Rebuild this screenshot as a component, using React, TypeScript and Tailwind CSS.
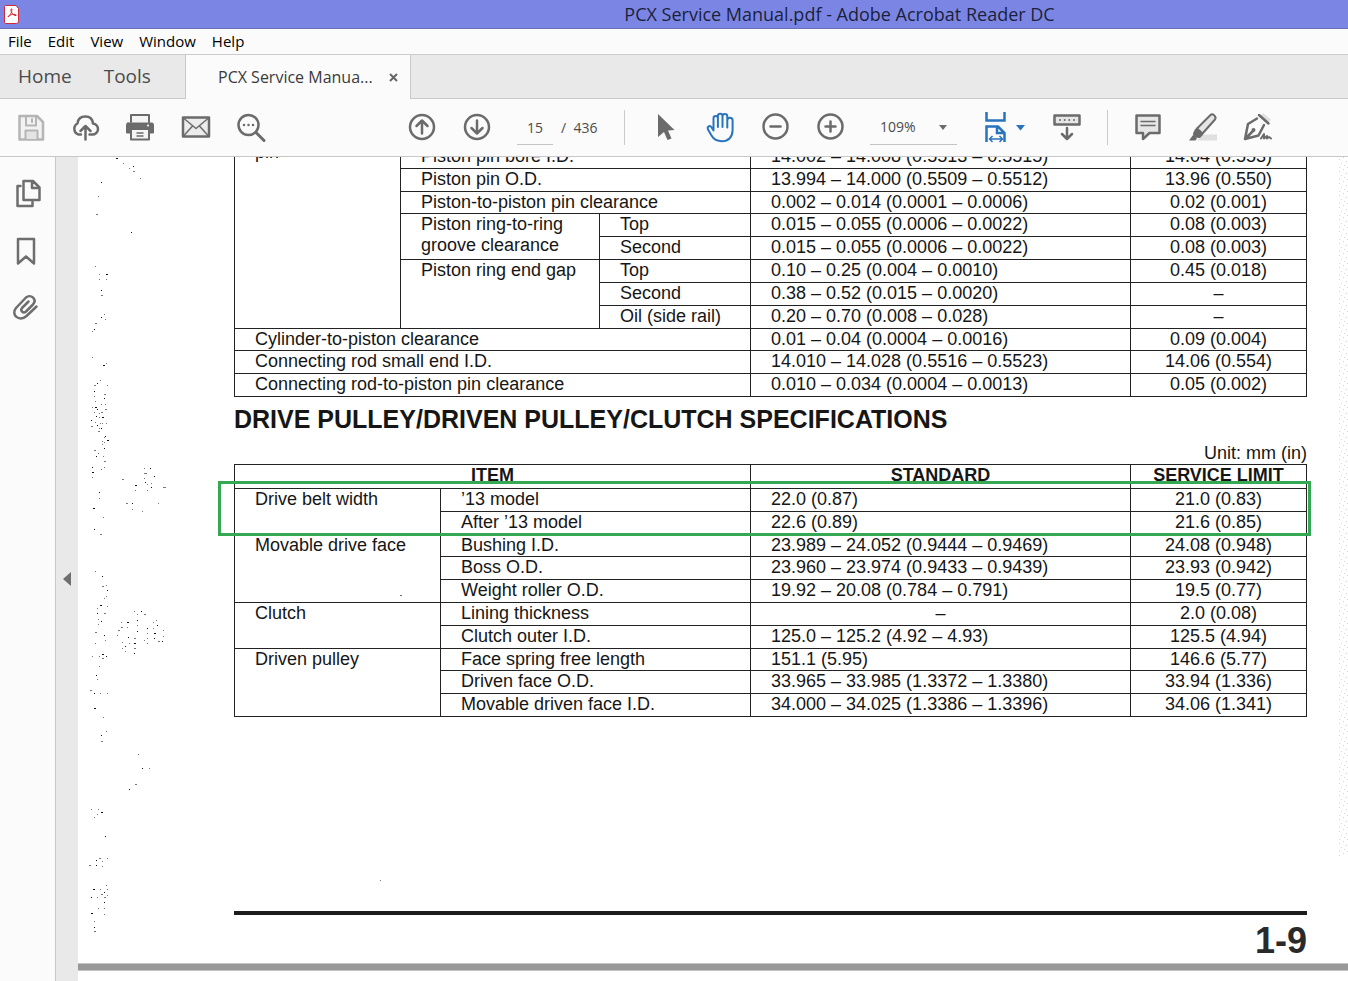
import type { ReactNode } from "react";

type SpecRow = {
  cells: { text: string; cols?: number; rows?: number; tight?: boolean }[];
  standard: string;
  limit: string;
};

const menus = ["File", "Edit", "View", "Window", "Help"];

const pistonRows: SpecRow[] = [
  { cells: [{ text: "pin", rows: 8, tight: true }, { text: "Piston pin bore I.D.", cols: 2 }], standard: "14.002 – 14.008 (0.5513 – 0.5515)", limit: "14.04 (0.553)" },
  { cells: [{ text: "Piston pin O.D.", cols: 2 }], standard: "13.994 – 14.000 (0.5509 – 0.5512)", limit: "13.96 (0.550)" },
  { cells: [{ text: "Piston-to-piston pin clearance", cols: 2 }], standard: "0.002 – 0.014 (0.0001 – 0.0006)", limit: "0.02 (0.001)" },
  { cells: [{ text: "Piston ring-to-ring groove clearance", rows: 2 }, { text: "Top" }], standard: "0.015 – 0.055 (0.0006 – 0.0022)", limit: "0.08 (0.003)" },
  { cells: [{ text: "Second" }], standard: "0.015 – 0.055 (0.0006 – 0.0022)", limit: "0.08 (0.003)" },
  { cells: [{ text: "Piston ring end gap", rows: 3 }, { text: "Top" }], standard: "0.10 – 0.25 (0.004 – 0.0010)", limit: "0.45 (0.018)" },
  { cells: [{ text: "Second" }], standard: "0.38 – 0.52 (0.015 – 0.0020)", limit: "–" },
  { cells: [{ text: "Oil (side rail)" }], standard: "0.20 – 0.70 (0.008 – 0.028)", limit: "–" },
  { cells: [{ text: "Cylinder-to-piston clearance", cols: 3 }], standard: "0.01 – 0.04 (0.0004 – 0.0016)", limit: "0.09 (0.004)" },
  { cells: [{ text: "Connecting rod small end I.D.", cols: 3 }], standard: "14.010 – 14.028 (0.5516 – 0.5523)", limit: "14.06 (0.554)" },
  { cells: [{ text: "Connecting rod-to-piston pin clearance", cols: 3 }], standard: "0.010 – 0.034 (0.0004 – 0.0013)", limit: "0.05 (0.002)" },
];

const clutchRows: SpecRow[] = [
  { cells: [{ text: "Drive belt width", rows: 2 }, { text: "’13 model" }], standard: "22.0 (0.87)", limit: "21.0 (0.83)" },
  { cells: [{ text: "After ’13 model" }], standard: "22.6 (0.89)", limit: "21.6 (0.85)" },
  { cells: [{ text: "Movable drive face", rows: 3 }, { text: "Bushing I.D." }], standard: "23.989 – 24.052 (0.9444 – 0.9469)", limit: "24.08 (0.948)" },
  { cells: [{ text: "Boss O.D." }], standard: "23.960 – 23.974 (0.9433 – 0.9439)", limit: "23.93 (0.942)" },
  { cells: [{ text: "Weight roller O.D." }], standard: "19.92 – 20.08 (0.784 – 0.791)", limit: "19.5 (0.77)" },
  { cells: [{ text: "Clutch", rows: 2 }, { text: "Lining thickness" }], standard: "–", limit: "2.0 (0.08)" },
  { cells: [{ text: "Clutch outer I.D." }], standard: "125.0 – 125.2 (4.92 – 4.93)", limit: "125.5 (4.94)" },
  { cells: [{ text: "Driven pulley", rows: 3 }, { text: "Face spring free length" }], standard: "151.1 (5.95)", limit: "146.6 (5.77)" },
  { cells: [{ text: "Driven face O.D." }], standard: "33.965 – 33.985 (1.3372 – 1.3380)", limit: "33.94 (1.336)" },
  { cells: [{ text: "Movable driven face I.D." }], standard: "34.000 – 34.025 (1.3386 – 1.3396)", limit: "34.06 (1.341)" },
];

// scanner dirt down the left margin of the page, as "x,y" pairs
const specks =
  "38,1 45,6 51,11 55,9 55,14 62,21 23,25 20,39 18,57 53,75 17,109 21,117 28,117 21,122 28,122 23,133 23,138 26,157 23,160 27,162 17,166 16,172 14,174 14,200 25,208 28,206 22,223 19,226 16,228 29,228 16,234 16,239 26,237 26,241 17,244 14,250 17,250 23,247 27,247 19,252 27,252 16,255 18,259 21,256 23,255 13,263 17,265 21,260 24,260 22,266 24,266 19,268 13,269 21,271 23,271 28,266 20,274 27,279 26,280 24,284 29,283 26,285 24,287 26,291 16,293 20,296 18,299 25,299 26,304 14,310 26,310 23,312 14,315 14,320 66,311 72,311 66,316 68,316 76,319 66,321 " +
  "44,322 67,325 69,327 73,326 57,328 57,333 69,333 73,330 85,330 87,330 21,335 21,341 48,346 54,346 80,346 54,352 15,351 64,354 25,360 16,372 22,377 17,414 24,419 28,428 24,429 29,433 28,439 26,441 22,448 29,449 19,451 19,456 26,456 20,462 23,464 20,467 17,475 26,478 27,483 17,486 24,497 14,499 21,499 28,499 24,501 21,509 18,518 19,522 12,533 16,536 22,536 29,536 16,551 25,560 28,574 23,578 23,584 60,597 64,611 71,611 57,627 51,632 13,652 20,652 23,655 19,657 16,660 27,679 21,701 29,701 18,703 24,704 11,708 18,708 24,709 28,728 15,732 22,732 29,732 26,735 23,737 29,738 13,740 19,740 26,740 26,745 20,751 26,751 13,756 26,757 16,764 16,770 16,774 " +
  "56,454 63,454 59,457 66,457 59,463 78,463 43,465 49,465 75,465 59,468 79,468 43,470 49,470 69,471 75,471 40,473 59,474 85,473 69,476 76,476 39,478 85,479 50,480 56,481 69,481 76,481 66,483 80,484 84,484 44,485 51,486 56,486 69,486 44,491 47,489 56,491 47,494 56,496 302,723 322,438";

function Icon({ children, className = "" }: { children: ReactNode; className?: string }) {
  return (
    <svg width="32" height="32" viewBox="0 0 32 32" fill="none" stroke="currentColor" strokeWidth="2" strokeLinecap="round" strokeLinejoin="round" className={className} aria-hidden="true">
      {children}
    </svg>
  );
}

function ToolButton({ label, children, className = "text-[#6b6b6b]" }: { label: string; children: ReactNode; className?: string }) {
  return (
    <button type="button" aria-label={label} className={`flex h-10 w-[55px] shrink-0 items-center justify-center ${className}`}>
      {children}
    </button>
  );
}

function Divider() {
  return <div className="h-[35px] w-px shrink-0 bg-[#cacaca]" />;
}

function SpecRows({ rows }: { rows: SpecRow[] }) {
  return (
    <>
      {rows.map((row, i) => (
        <tr key={i}>
          {row.cells.map((cell) => (
            <td
              key={cell.text}
              colSpan={cell.cols}
              rowSpan={cell.rows}
              className={cell.tight ? "border border-[#222] pl-5 align-top leading-3" : "border border-[#222] pl-5 align-top"}
            >
              {cell.text}
            </td>
          ))}
          <td className={row.standard === "–" ? "border border-[#222] text-center align-top" : "border border-[#222] pl-5 align-top"}>{row.standard}</td>
          <td className="border border-[#222] text-center align-top">{row.limit}</td>
        </tr>
      ))}
    </>
  );
}

function Toolbar() {
  return (
    <div className="flex h-[58px] shrink-0 items-center border-b border-[#c8c8c8] bg-[#fbfbfb] pl-[3px]">
      <ToolButton label="Save" className="text-[#b5b5b5]">
        <Icon>
          <path strokeWidth="2.500" fill="#f2f2f2" d="M4.500 4h17.500l6 6v17.500h-23.500z" />
          <path d="M11 4.500v9h10v-9M17 7v3" />
          <path fill="#e4e4e4" d="M10.500 27v-8.500h12v8.500" />
        </Icon>
      </ToolButton>
      <ToolButton label="Share">
        <Icon>
          <path strokeWidth="2.500" d="M11 22.500H8.500A6 6 0 0 1 7.500 11.500C8 6.500 11.500 4.500 15.500 4.500S22.500 7 23 11.500A5.500 5.500 0 0 1 22 22.500h-2.500M15.500 27.500V14.500M10.500 19l5-5 5 5" />
        </Icon>
      </ToolButton>
      <ToolButton label="Print">
        <Icon>
          <path fill="#f4f4f4" d="M6 10V3h18v7" />
          <path fill="currentColor" d="M3 11h24a1.500 1.500 0 0 1 1.500 1.500v8.500h-4v-3h-19v3h-4v-8.500A1.500 1.500 0 0 1 3 11z" strokeWidth="1" />
          <path d="M6 17h18V27.500H6z" fill="#f4f4f4" />
          <path strokeWidth="1.500" d="M12 21h6M12 24h6" />
          <circle cx="23" cy="13.500" r="1" fill="#fff" stroke="none" />
        </Icon>
      </ToolButton>
      <ToolButton label="Email">
        <Icon>
          <path strokeWidth="2.500" fill="#ececec" d="M3 5.500h26v19H3z" />
          <path strokeWidth="1.500" d="M4 6.500l12 10 12-10M4 23.500l8.500-9.500M28 23.500L19.500 14" />
        </Icon>
      </ToolButton>
      <ToolButton label="Find">
        <Icon>
          <circle cx="13.500" cy="13" r="10" strokeWidth="2.500" />
          <path strokeWidth="3" d="M21 20.500l8 8" />
          <path strokeWidth="2.500" d="M9 13h0M13.500 13h0M18 13h0" />
        </Icon>
      </ToolButton>

      <div className="ml-[116px] flex shrink-0">
        <ToolButton label="Previous page">
          <Icon>
            <circle cx="16" cy="15" r="12" strokeWidth="2.500" />
            <path strokeWidth="2.500" d="M16 21.500V9M10.500 14l5.500-5.500 5.500 5.500" />
          </Icon>
        </ToolButton>
        <ToolButton label="Next page">
          <Icon>
            <circle cx="16" cy="15" r="12" strokeWidth="2.500" />
            <path strokeWidth="2.500" d="M16 8.500V21M10.500 16l5.500 5.500 5.500-5.500" />
          </Icon>
        </ToolButton>
      </div>
      <input aria-label="Page number" defaultValue="15" className="ml-[13px] h-[35px] w-9 shrink-0 border-b border-[#c4c4c4] bg-transparent text-center text-sm text-[#4b4b4b] outline-none" />
      <span className="ml-2 w-[63px] shrink-0 text-sm text-[#4b4b4b]">/&nbsp; 436</span>
      <Divider />
      <div className="ml-[13px] flex shrink-0">
        <ToolButton label="Select">
          <Icon>
            <path fill="currentColor" stroke="none" d="M8 2v23l6-5 3.500 8 4-1.500-3.500-8 6.500-.5z" />
          </Icon>
        </ToolButton>
        <ToolButton label="Pan" className="text-[#2a73bd]">
          <Icon>
            <path d="M8.500 18.500V6.200a2.200 2.200 0 0 1 4.400 0V15V4a2.300 2.300 0 0 1 4.600 0V15V4.500a2.400 2.400 0 0 1 4.800 0V15.500V8.500a2.300 2.300 0 0 1 5.300 0V18C27.600 25 23.500 29.200 17 29.200C11.500 29.200 8.500 27 6.500 23.500L3 17.500C1.800 14.500 5 13 6.500 15.200L8.500 18.500" />
          </Icon>
        </ToolButton>
        <ToolButton label="Zoom out">
          <Icon>
            <circle cx="15.500" cy="14.500" r="12" strokeWidth="2.500" />
            <path strokeWidth="2.500" d="M10.500 14.500h10" />
          </Icon>
        </ToolButton>
        <ToolButton label="Zoom in">
          <Icon>
            <circle cx="15.500" cy="14.500" r="12" strokeWidth="2.500" />
            <path strokeWidth="2.500" d="M10.500 14.500h10M15.500 9.500v10" />
          </Icon>
        </ToolButton>
      </div>
      <div className="relative ml-3 w-[87px] shrink-0">
        <select aria-label="Zoom level" className="h-[35px] w-full appearance-none border-b border-[#c4c4c4] bg-transparent pl-[10px] text-sm text-[#4b4b4b]">
          <option>109%</option>
        </select>
        <svg width="10" height="6" viewBox="0 0 10 6" className="pointer-events-none absolute right-[9px] top-[15px] text-[#6b6b6b]" aria-hidden="true">
          <path fill="currentColor" d="M1 0h8L5 5z" />
        </svg>
      </div>
      <button type="button" aria-label="Fit to width" className="ml-[27px] flex h-10 w-14 shrink-0 items-center gap-2 text-[#2a73bd]">
        <svg width="24" height="32" viewBox="0 0 24 32" fill="none" stroke="currentColor" strokeWidth="2.500" aria-hidden="true">
          <path d="M2.500 0v8.500h18V0M2.500 30V14.500h11.500l6.500 6.500V30M13 14.500V21h7.500" />
          <path strokeWidth="1.500" d="M5.500 27h13M8.500 24l-3 3 3 3M15.500 24l3 3-3 3" />
        </svg>
        <svg width="9" height="6" viewBox="0 0 9 6" aria-hidden="true">
          <path fill="currentColor" d="M0 0h9L4.500 5.500z" />
        </svg>
      </button>
      <div className="-ml-px flex shrink-0">
        <ToolButton label="Page display">
          <Icon>
            <path strokeWidth="2.500" fill="#e6e6e6" d="M3.500 3.500h25v9h-25z" />
            <path d="M9 8h0M13.700 8h0M18.300 8h0M23 8h0" />
            <path strokeWidth="2.500" d="M16 16v11M11 22l5 5 5-5" />
          </Icon>
        </ToolButton>
      </div>
      <div className="ml-[13px]">
        <Divider />
      </div>
      <div className="ml-3 flex shrink-0">
        <ToolButton label="Comment">
          <Icon>
            <path strokeWidth="2.500" fill="#e6e6e6" d="M4.500 3.500h23v17.500H17.500l-6.500 6v-6h-6.500z" />
            <path strokeWidth="1.500" d="M9 9.500h14M9 13.500h14" />
          </Icon>
        </ToolButton>
        <ToolButton label="Highlight">
          <Icon>
            <path fill="#e0e0e0" stroke="none" d="M16 22.500h14v6H10z" />
            <path fill="#e6e6e6" d="M10 16.500L23.500 3c2-2 6.500 1.500 4.500 4.500L15.500 21.500z" />
            <path fill="currentColor" d="M9 17.500l6 5-2.500 2.500-5-.5-.5-3z" />
            <path fill="currentColor" stroke="none" d="M6 23l4 3.500-1.500 2H2z" />
          </Icon>
        </ToolButton>
        <ToolButton label="Sign">
          <Icon>
            <path fill="#e0e0e0" stroke="none" d="M18 3.500l8 7.500 3-3.500-7.500-6z" />
            <path strokeWidth="2.500" d="M17 3l9.500 8.500M15 6.500L6 12 3 27l13.500-3.500L22 13M4 26l7-7" />
            <circle cx="11.500" cy="18" r="1" />
            <path d="M19 26.500l3-4.500v4.500l3-2.500v2.500l2-1.500 2 1.500" />
          </Icon>
        </ToolButton>
      </div>
    </div>
  );
}

function Sidebar() {
  return (
    <>
      <nav aria-label="Panels" className="flex w-14 shrink-0 flex-col border-r border-[#c8c8c8] bg-[#fbfbfb] pt-4 text-[#6e6e6e]">
        <button type="button" aria-label="Page thumbnails" className="flex h-[57px] items-start justify-center pt-1">
          <Icon>
            <path strokeWidth="2.500" d="M8.500 9H5.500V29h15v-4M11.500 4H21l6.500 6.500V23h-16zM20 4.500v6.500h7" />
          </Icon>
        </button>
        <button type="button" aria-label="Bookmarks" className="flex h-[57px] items-start justify-center pt-1">
          <Icon>
            <path strokeWidth="2.500" d="M6 5h16v24.500l-8-7-8 7z" />
          </Icon>
        </button>
        <button type="button" aria-label="Attachments" className="flex h-[57px] items-start justify-center pt-1">
          <Icon>
            <path strokeWidth="2.500" d="M24.500 15.500L14.500 25C7 31.500-1.500 23.500 4 17L14 6.500C18.500 2.500 25.500 8 21 13.500L14 20.500c-3 2.500-6-1-4-3.500l6.500-6.500" />
          </Icon>
        </button>
      </nav>
      <button type="button" aria-label="Collapse panel" className="flex w-[22px] shrink-0 items-center justify-center bg-[#e9e9e9] pt-5">
        <svg width="8" height="14" viewBox="0 0 8 14" aria-hidden="true">
          <path fill="#6e6e6e" d="M8 0v14L0 7z" />
        </svg>
      </button>
    </>
  );
}

function ManualPage() {
  return (
    <article className="relative flex h-[806px] shrink-0 flex-col bg-white pl-[156px] pr-[41px] font-['Liberation_Sans',Arial,sans-serif] text-lg leading-[21px] text-[#161616]">
      <svg className="pointer-events-none absolute left-0 top-0 h-full w-full" aria-hidden="true">
        {specks.split(" ").map((speck, i) => {
          const [x, y] = speck.split(",");
          return <rect key={i} x={x} y={y} width={i % 4 ? 1 : 2} height="1" fill={i % 3 ? "#777" : "#111"} />;
        })}
      </svg>
      <svg className="pointer-events-none absolute right-0 top-0 h-[700px] w-[10px]" aria-hidden="true">
        <defs>
          <pattern id="edge" width="10" height="12" patternUnits="userSpaceOnUse">
            <path fill="#d6d6d6" d="M1 2h1v1H1zM5 0h1v1H5zM8 4h1v1H8zM3 6h1v1H3zM6 8h1v1H6zM1 10h1v1H1zM9 10h1v1H9z" />
          </pattern>
        </defs>
        <rect width="10" height="700" fill="url(#edge)" />
      </svg>

      <table className="-mt-3 h-[252px] w-full table-fixed border-collapse">
        <colgroup>
          <col className="w-[166px]" />
          <col className="w-[199px]" />
          <col className="w-[151px]" />
          <col />
          <col className="w-[176px]" />
        </colgroup>
        <tbody>
          <SpecRows rows={pistonRows} />
        </tbody>
      </table>

      <h2 className="mt-[7px] text-[25px] font-bold leading-[30px]">DRIVE PULLEY/DRIVEN PULLEY/CLUTCH SPECIFICATIONS</h2>
      <p className="mt-[9px] text-right">Unit: mm (in)</p>

      <div className="relative">
        <table className="h-[253px] w-full table-fixed border-collapse">
          <colgroup>
            <col className="w-[206px]" />
            <col className="w-[310px]" />
            <col />
            <col className="w-[176px]" />
          </colgroup>
          <thead>
            <tr className="h-6">
              <th colSpan={2} className="border border-[#222] align-top">ITEM</th>
              <th className="border border-[#222] align-top">STANDARD</th>
              <th className="border border-[#222] align-top">SERVICE LIMIT</th>
            </tr>
          </thead>
          <tbody>
            <SpecRows rows={clutchRows} />
          </tbody>
        </table>
        <div className="pointer-events-none absolute -left-4 -right-1 top-[17px] h-[55px] border-[3px] border-[#34a853]" />
      </div>

      <div className="mt-auto h-1 bg-[#1c1c1c]" />
      <p className="pb-1 pt-2 text-right text-4xl font-bold leading-9 text-[#2a2a2a]">1-9</p>
    </article>
  );
}

export default function App() {
  return (
    <div className="flex h-screen flex-col overflow-hidden bg-white font-['Open_Sans','Noto_Sans',sans-serif]">
      <header className="flex h-[29px] shrink-0 items-center border-b border-[#6c72b8] bg-[#7b86e4] pl-1">
        <svg width="15" height="19" viewBox="0 0 15 19" fill="none" aria-hidden="true">
          <path fill="#fff" stroke="#cf2a36" d="M1.500.5h10.500l2.500 3v13q0 2-2 2h-11q-1 0-1-1v-16q0-1 1-1z" />
          <path stroke="#d92d36" d="M4 12c2-1 4-5 4-8-1.500-1-1.500 2 0 4 1 1.500 2.500 3 4 2.500s-1-1.500-3.500-1S4 10.500 4 12z" />
        </svg>
        <h1 className="flex-1 pl-[312px] text-center text-lg text-[#1c1f3c]">PCX Service Manual.pdf - Adobe Acrobat Reader DC</h1>
      </header>

      <nav aria-label="Menu bar" className="flex h-[26px] shrink-0 items-center gap-4 border-b border-[#cbcbcb] bg-[#fbfbfb] pl-2 text-[15px] text-black">
        {menus.map((menu) => (
          <button key={menu} type="button">
            {menu}
          </button>
        ))}
      </nav>

      <div className="flex h-11 shrink-0 bg-[#e9e9e9] text-[#4b4b4b]">
        <div className="flex w-[185px] items-center gap-8 border-b border-[#c8c8c8] pl-[18px] text-[19px]">
          <button type="button">Home</button>
          <button type="button">Tools</button>
        </div>
        <div className="flex w-[226px] items-center border-x border-[#c8c8c8] bg-[#fbfbfb] pl-8 text-base text-[#3a3a3a]">
          <button type="button" className="w-[171px] text-left">PCX Service Manua...</button>
          <button type="button" aria-label="Close tab">
            <svg width="9" height="9" viewBox="0 0 9 9" fill="none" stroke="#666" strokeWidth="2" aria-hidden="true">
              <path d="M1 1l7 7M8 1L1 8" />
            </svg>
          </button>
        </div>
        <div className="flex-1 border-b border-[#c8c8c8]" />
      </div>

      <Toolbar />

      <div className="flex min-h-0 flex-1">
        <Sidebar />
        <main className="flex min-w-0 flex-1 flex-col overflow-hidden">
          <ManualPage />
          <div className="h-2 shrink-0 border-y border-[#c4c4c4] bg-[#999]" />
          <div className="flex-1 bg-white" />
        </main>
      </div>
    </div>
  );
}
